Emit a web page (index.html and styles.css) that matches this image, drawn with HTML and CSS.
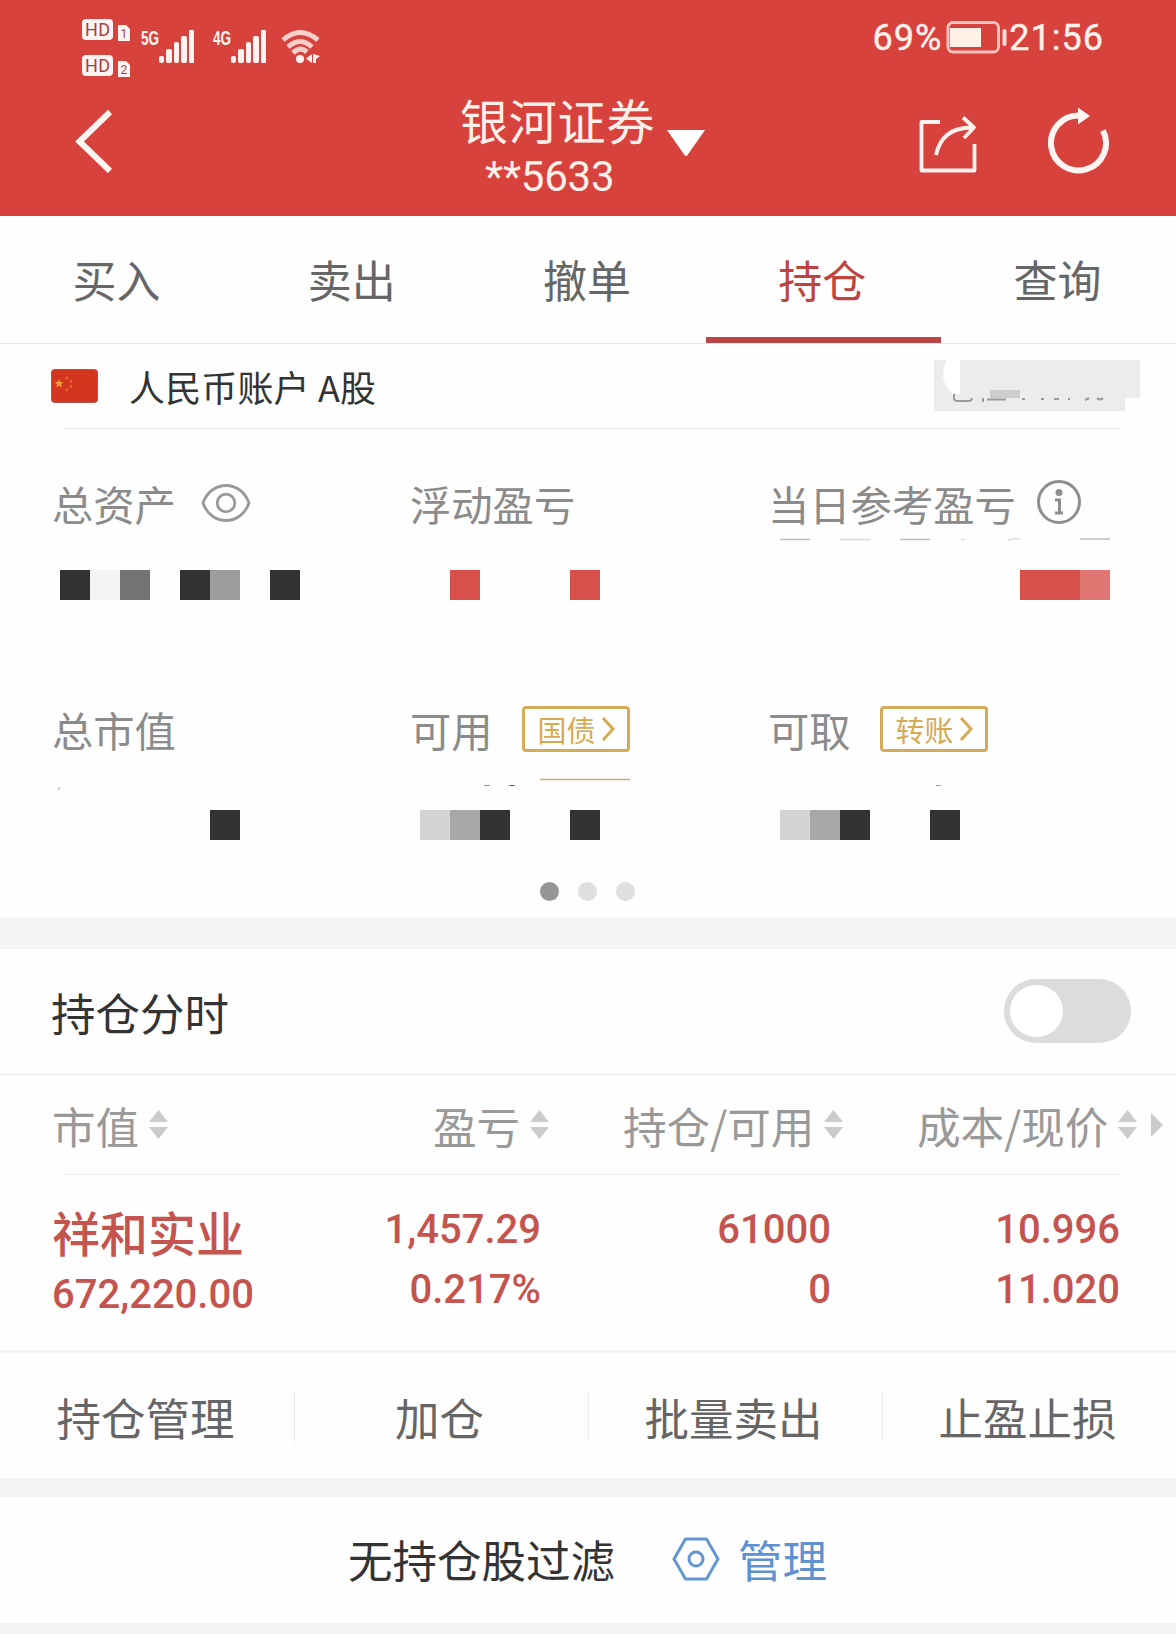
FILE: index.html
```html
<!DOCTYPE html>
<html lang="zh-CN">
<head>
<meta charset="utf-8">
<title>持仓</title>
<link rel="stylesheet" href="styles.css">
</head>
<body>
<header class="top">
  <div class="status">
    <svg class="signals" width="240" height="64" viewBox="82 16 240 64">
      <g fill="#fff4f1">
        <rect x="82" y="19" width="31" height="21" rx="4"/><rect x="82" y="55" width="31" height="21" rx="4"/>
        <path d="M118 25h8l4 4v12h-12zM118 61h8l4 4v12h-12z"/>
        <rect x="159" y="56" width="5" height="7" rx="2"/><rect x="166" y="49" width="6" height="14" rx="2"/><rect x="174" y="42" width="5" height="21" rx="2"/><rect x="181" y="36" width="6" height="27" rx="2"/><rect x="189" y="30" width="5" height="33" rx="1"/>
        <rect x="231" y="56" width="5" height="7" rx="2"/><rect x="238" y="49" width="6" height="14" rx="2"/><rect x="246" y="42" width="5" height="21" rx="2"/><rect x="253" y="36" width="6" height="27" rx="2"/><rect x="261" y="30" width="5" height="33" rx="1"/>
        <circle cx="300" cy="59" r="4"/>
        <path d="M312 54v9l-6-4.500zM313 54v9h3v-4l4-3z"/>
      </g>
      <g fill="none" stroke="#f9cfcb" stroke-width="5">
        <path d="M283 40Q300 25 318 40M288 47Q300 36 312 47M293 53Q300 46 307 52"/>
      </g>
      <g class="hd"><text x="85" y="36" textLength="25">HD</text><text x="85" y="72" textLength="25">HD</text></g>
      <g class="sim"><text x="120.500" y="38">1</text><text x="120.500" y="74">2</text></g>
      <g class="net"><text x="141" y="45" textLength="18" lengthAdjust="spacingAndGlyphs">5G</text><text x="213" y="45" textLength="18" lengthAdjust="spacingAndGlyphs">4G</text></g>
    </svg>
    <div class="clock">
      <span>69%</span>
      <svg width="62" height="34" viewBox="948 19 62 34">
        <rect x="950" y="21.500" width="50.500" height="29.500" rx="5" fill="none" stroke="#ffc0bf" stroke-width="3"/>
        <rect x="952" y="27" width="31" height="19" fill="#fff0e8"/><rect x="1004.500" y="28" width="4" height="17" rx="2" fill="#ffdcd8"/>
      </svg>
      <span>21:56</span>
    </div>
  </div>
  <div class="nav">
    <svg class="back" width="40" height="64" viewBox="75 109 40 64"><path d="M110 112L79.500 141.500L110 171" fill="none" stroke="#fff5f2" stroke-width="6"/></svg>
    <div class="title"><div class="broker">银河证券</div><div class="acct">**5633</div></div>
    <svg class="caret" width="40" height="28" viewBox="0 0 40 28"><path d="M1 1H39L21.500 26Q20 28 18.500 26Z" fill="#fff"/></svg>
    <svg class="share" width="60" height="60" viewBox="919 114 60 60" fill="none" stroke="#fff1ed" stroke-width="3.800" stroke-linejoin="round">
      <path d="M941 122H922.500V170.500H975.500V144M937 155Q943 127 974 127.500M964 117.500L975 127.500L965 138"/>
    </svg>
    <svg class="reload" width="66" height="70" viewBox="1047 106 66 70"><path d="M1081 116.500A27.500 27.500 0 1 0 1105 131.500" fill="none" stroke="#fff5f2" stroke-width="6"/><path d="M1080 108.500L1092 117L1080 125.500Z" fill="#fff5f2"/></svg>
  </div>
</header>

<nav class="tabs"><a>买入</a><a>卖出</a><a>撤单</a><a class="on">持仓</a><a>查询</a></nav>

<section class="account">
  <svg class="flag" width="47" height="34" viewBox="0 0 47 34"><rect x=".5" y=".5" width="46" height="33" rx="3" fill="#d3351f" stroke="#b4534b"/><path d="M8 10l1.200 3 3.300.200-2.500 2 1 3.200-3-1.800-2.800 1.800.900-3.200-2.500-2 3.200-.200z" fill="#f5a13c"/><g fill="#e8682e"><circle cx="16" cy="9" r="1.400"/><circle cx="20" cy="12.500" r="1.400"/><circle cx="20" cy="17.500" r="1.400"/><circle cx="16" cy="21" r="1.400"/></g></svg>
  <span class="name">人民币账户 A股</span>
  <svg class="masked" width="206" height="52" viewBox="934 360 206 52">
    <path d="M934 360H1140V398H1125V411H934Z" fill="#eeebed"/><path d="M960 360H947Q943 367 943 376Q945 389 954 394H960Z" fill="#fff"/>
    <rect x="990" y="390" width="30" height="8" fill="#cecccd"/>
    <path d="M954 394v4q0 3 4 3h10q4 0 4-3M983 398v4M987 399.500h19M1022 399h3M1041 399h3M1054 399h5M1068 399h2M1085 400l4-2M1097 398q3 3 6 0" fill="none" stroke="#9b999a" stroke-width="2"/>
  </svg>
</section>

<section class="assets">
  <div class="labels">
    <div>总资产<svg class="eye" width="50" height="38" viewBox="0 0 50 38" fill="none" stroke="#999" stroke-width="2.800"><path d="M2 19C6 7 16 1.500 25 1.500S44 7 48 19C44 31 34 36.500 25 36.500S6 31 2 19Z"/><circle cx="25" cy="19" r="8.800"/></svg></div>
    <div>浮动盈亏</div>
    <div>当日参考盈亏<svg class="info" width="46" height="46" viewBox="0 0 46 46"><circle cx="23" cy="23" r="20.500" fill="none" stroke="#8e8e8e" stroke-width="3"/><circle cx="23" cy="13.500" r="3.500" fill="#8e8e8e"/><path d="M19 21h4.500v12.500M19 34h8" fill="none" stroke="#8e8e8e" stroke-width="3"/></svg></div>
  </div>
  <svg class="values" width="1176" height="182" viewBox="0 524 1176 182">
    <g fill="#323232"><rect x="60" y="570" width="30" height="30"/><rect x="180" y="570" width="30" height="30"/><rect x="270" y="570" width="30" height="30"/></g>
    <rect x="90" y="570" width="30" height="30" fill="#f3f3f4"/><rect x="120" y="570" width="30" height="30" fill="#737373"/><rect x="210" y="570" width="30" height="30" fill="#9d9d9d"/>
    <g fill="#d9504b"><rect x="450" y="570" width="30" height="30"/><rect x="570" y="570" width="30" height="30"/><rect x="1020" y="570" width="60" height="30"/></g>
    <rect x="1080" y="570" width="30" height="30" fill="#df7672"/>
    <path d="M780 539.500h30M900 539.500h30M1080 539h30" stroke="#bdbdbd" stroke-width="1.500"/><path d="M840 539.500h30M961 539.500h4M1008 540q8-2 12-1" stroke="#dcdcdc" stroke-width="1.500" fill="none"/>
  </svg>
  <div class="labels second">
    <div>总市值</div>
    <div>可用<span class="chip">国债<svg width="14" height="26" viewBox="0 0 14 26"><path d="M2 2L12 13L2 24" fill="none" stroke="#d6aa50" stroke-width="3"/></svg></span></div>
    <div>可取<span class="chip">转账<svg width="14" height="26" viewBox="0 0 14 26"><path d="M2 2L12 13L2 24" fill="none" stroke="#d6aa50" stroke-width="3"/></svg></span></div>
  </div>
  <svg class="values" width="1176" height="131" viewBox="0 751 1176 131">
    <g fill="#323232"><rect x="210" y="810" width="30" height="30"/><rect x="480" y="810" width="30" height="30"/><rect x="570" y="810" width="30" height="30"/><rect x="840" y="810" width="30" height="30"/><rect x="930" y="810" width="30" height="30"/></g>
    <g fill="#d4d4d4"><rect x="420" y="810" width="30" height="30"/><rect x="780" y="810" width="30" height="30"/></g>
    <g fill="#a8a8a8"><rect x="450" y="810" width="30" height="30"/><rect x="810" y="810" width="30" height="30"/></g>
    <path d="M540 779.500h90" stroke="#cdb071" stroke-width="1.500"/>
    <path d="M484 785.500h6M936 785.500h5M58 790l1.500-3" stroke="#999" stroke-width="1"/><path d="M508 786q4-2 8 0z" fill="#444"/>
  </svg>
  <div class="dots"><i class="cur"></i><i></i><i></i></div>
</section>

<section class="minute"><span>持仓分时</span><span class="toggle"><i></i></span></section>

<section class="holdings">
  <div class="cols head">
    <div>市值<svg class="sort" width="19" height="29"><use href="#sort"/></svg></div>
    <div>盈亏<svg class="sort" width="19" height="29"><use href="#sort"/></svg></div>
    <div>持仓/可用<svg class="sort" width="19" height="29"><use href="#sort"/></svg></div>
    <div>成本/现价<svg class="sort" width="19" height="29"><g id="sort" fill="#cbcbcb"><path d="M9.500 0L19 12H0Z"/><path d="M9.500 29L0 17H19Z"/></g></svg><svg class="more" width="12" height="24"><path d="M0 0L12 12L0 24Z" fill="#cbcbcb"/></svg></div>
  </div>
  <div class="cols stock">
    <div><b>祥和实业</b><span class="mv">672,220.00</span></div>
    <div><span>1,457.29</span><span>0.217%</span></div>
    <div><span>61000</span><span>0</span></div>
    <div><span>10.996</span><span>11.020</span></div>
  </div>
</section>

<section class="actions"><a>持仓管理</a><a>加仓</a><a>批量卖出</a><a>止盈止损</a></section>

<footer class="filter">
  <span>无持仓股过滤</span>
  <svg width="48" height="44" viewBox="0 0 48 44" fill="none" stroke="#6496d2" stroke-width="3"><path d="M13.500 2H34.500L46 22L34.500 42H13.500L2 22Z" stroke-linejoin="round"/><circle cx="24" cy="22" r="7"/></svg>
  <a>管理</a>
</footer>
</body>
</html>
```
FILE: styles.css
```css
* { box-sizing: border-box; }
body {
  margin: 0;
  width: 1176px;
  height: 1634px;
  overflow: hidden;
  background: #f5f4f5;
  color: #333;
  font-family: "Noto Sans CJK SC", sans-serif;
}
svg { display: block; flex: none; }
section, footer, .tabs { background: #fefefe; }

.top { height: 216px; background: #d7423d; color: #fff0e9; }
.status { display: flex; justify-content: space-between; height: 80px; padding: 16px 72px 0 82px; }
.hd { font: 18px Roboto, sans-serif; fill: #a5423d; }
.sim { font: 12px Roboto, sans-serif; fill: #a5423d; }
.net { font: bold 21px "Liberation Sans", sans-serif; fill: #fff4f1; }
.clock { display: flex; align-items: center; height: 41px; font: 36px/40px Roboto, sans-serif; letter-spacing: 1px; }
.clock span { padding-top: 2px; -webkit-text-stroke: 0.4px; }
.clock svg { margin: 0 1px 0 4px; }

.nav { display: flex; height: 136px; padding-left: 75px; }
.back { margin-top: 29px; }
.title { width: 200px; margin: 7px 0 0 345px; white-space: nowrap; }
.broker { font-size: 48px; line-height: 64px; letter-spacing: 0.8px; }
.acct { padding: 2px 0 0 25px; font: 42px/48px Roboto, sans-serif; letter-spacing: -0.2px; }
.caret { margin: 49px 0 0 6px; }
.share { margin: 34px 0 0 212px; }
.reload { margin: 25px 0 0 67px; }

.tabs { display: flex; height: 128px; border-bottom: 1px solid #eaeaea; }
.tabs a { flex: 1; height: 127px; padding-right: 2px; border-bottom: 6px solid transparent; text-align: center; font-size: 44px; line-height: 127px; color: #666; }
.tabs .on { color: #bf443f; border-color: #b94647; }

.account { display: flex; align-items: flex-start; height: 85px; padding: 0 36px 0 51px; background: linear-gradient(#ebebeb, #ebebeb) 64px 84px / 1056px 1px no-repeat #fefefe; }
.flag { margin-top: 25px; }
.name { margin: 14px auto 0 31px; font-size: 36px; line-height: 56px; letter-spacing: 0.15px; }
.masked { margin-top: 16px; }

.assets { height: 488px; padding-top: 51px; }
.labels { display: grid; grid-template-columns: 358px 358px 1fr; height: 44px; padding-left: 52px; font-size: 41.3px; line-height: 44px; color: #8b8b8b; white-space: nowrap; }
.labels > div { display: flex; align-items: center; }
.labels.second { height: 45px; line-height: 45px; }
.eye { margin: 0 0 0 25px; }
.info { margin: -1px 0 0 20px; }
.chip { display: flex; align-items: center; width: 108px; height: 46px; margin-left: 29px; padding-left: 13px; border: 3px solid #d4ab59; border-radius: 4px; color: #d6aa50; font-size: 29px; line-height: 38px; }
.chip svg { margin-left: 5px; }
.dots { display: flex; gap: 19px; padding-left: 540px; }
.dots i { width: 19px; height: 19px; border-radius: 50%; background: #dfdfdf; }
.dots .cur { background: #949594; }

.minute { display: flex; align-items: center; justify-content: space-between; height: 126px; margin-top: 32px; padding: 0 45px 0 51px; border-bottom: 1px solid #ececec; font-size: 44.5px; }
.toggle { width: 127px; height: 64px; margin-bottom: 2px; padding: 6px; border-radius: 32px; background: #dcdcdc; }
.toggle i { display: block; width: 53px; height: 52px; border-radius: 50%; background: #fff; }

.holdings { height: 275px; }
.cols { display: grid; }
.head { grid-template-columns: 381px 190px 294px 1fr; height: 100px; padding-left: 52px; background: linear-gradient(#ebebeb, #ebebeb) 64px 99px / 1056px 1px no-repeat; color: #999; font-size: 43.6px; line-height: 101px; white-space: nowrap; }
.head > div { display: flex; }
.sort { margin: 35px 0 0 10px; }
.more { margin: 38px 0 0 14px; }
.stock { grid-template-columns: 268px 221px 290px 289px; padding: 25px 0 0 52px; color: #c5544f; font: 500 40px/60px Roboto, sans-serif; }
.stock > div { display: flex; flex-direction: column; text-align: right; }
.stock > div:first-child { text-align: left; }
.stock b { height: 65px; font: 500 48px/62px "Noto Sans CJK SC", sans-serif; }

.actions { display: grid; grid-template-columns: repeat(4, 294px); align-items: center; height: 128px; padding-top: 3px; border-top: 3px solid #f4f2f3; font-size: 44.5px; line-height: 50px; color: #666; }
.actions a { padding-right: 4px; text-align: center; border-left: 1px solid #ebebeb; }
.actions a:first-child { border-left-color: transparent; }

.filter { display: flex; align-items: center; height: 126px; margin-top: 19px; padding: 0 0 2px 348px; font-size: 44.5px; line-height: 60px; }
.filter svg { margin: 0 18px 0 57px; }
.filter a { color: #5e91cf; }
```
